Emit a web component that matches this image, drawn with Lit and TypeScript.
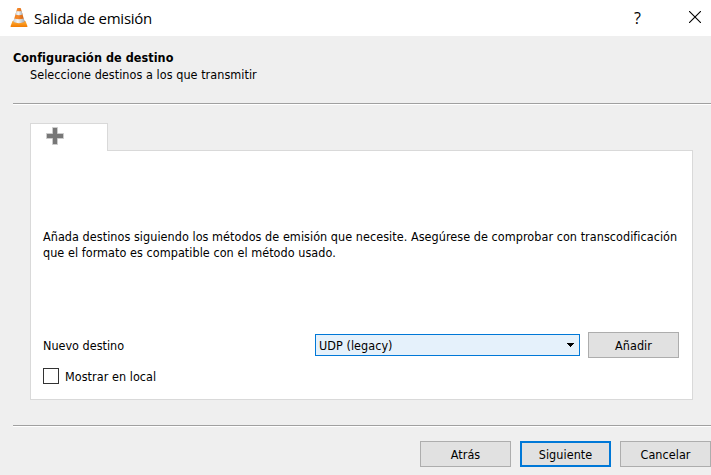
import { LitElement, html, css, svg } from "lit";
import { customElement } from "lit/decorators.js";

const cone = svg`
  <defs>
    <linearGradient id="base" x1="0" y1="0" x2="0" y2="1">
      <stop offset="0" stop-color="#ffb13a"></stop><stop offset="1" stop-color="#f27a00"></stop>
    </linearGradient>
    <linearGradient id="body" x1="0" y1="0" x2="1" y2="0">
      <stop offset="0" stop-color="#ee7a14"></stop><stop offset=".4" stop-color="#f58a2c"></stop><stop offset="1" stop-color="#cf5c0c"></stop>
    </linearGradient>
    <linearGradient id="band" x1="0" y1="0" x2="1" y2="0">
      <stop offset="0" stop-color="#c3cacf"></stop><stop offset=".4" stop-color="#f6f7f8"></stop><stop offset="1" stop-color="#a5adb4"></stop>
    </linearGradient>
  </defs>
  <path d="M2.500 13h13l2 5.300q.1.700-.6.700H1.100q-.7 0-.6-.7z" fill="url(#base)"></path>
  <path d="M7.200 .2Q9-.5 10.800 .2L14.700 14Q9 16.300 3.300 14z" fill="url(#body)"></path>
  <path d="M6.500 2.900Q9 3.700 11.500 2.900L12.600 6.600Q9 7.700 5.400 6.600z" fill="url(#band)"></path>
  <path d="M4.300 10.500Q9 11.900 13.700 10.500L14.700 14Q9 16.300 3.300 14z" fill="url(#band)"></path>`;

@customElement("app-root")
export class AppRoot extends LitElement {
  static styles = css`
    :host {
      display: flex; flex-direction: column; box-sizing: border-box;
      width: 711px; height: 475px; overflow: hidden; background: #efefef; color: #000;
      font: 12.5px/16px "DejaVu Sans Condensed", "DejaVu Sans", sans-serif; letter-spacing: .05px;
    }
    * { box-sizing: border-box; }
    svg { display: block; flex: none; }
    .titlebar { display: flex; align-items: center; height: 36px; flex: none; background: #fff; padding: 0 10px; }
    .title { font: 15px/20px "Open Sans", sans-serif; margin: -1px 0 0 6px; flex: 1; letter-spacing: -.25px; white-space: nowrap; }
    .help { font: 16px/20px "Open Sans", sans-serif; width: 10px; margin: -1px 45px 0 0; }
    .close { margin-top: -2px; }
    .head { height: 67px; flex: none; padding: 14px 13px 0; white-space: nowrap; }
    .heading { font-weight: bold; height: 17px; letter-spacing: .06px; }
    .sub { padding-left: 17px; }
    .rule { height: 2px; flex: none; margin-left: 13px; background: #a0a0a0; border-bottom: 1px solid #fff; }
    .tabs { margin: 18px 18px 0 30px; height: 277px; flex: none; display: flex; flex-direction: column; }
    .tab { width: 78px; height: 28px; flex: none; margin-bottom: -1px; z-index: 1; background: #fff; border: 1px solid #d9d9d9; border-bottom: 0; padding: 3px 0 0 15px; }
    .panel { flex: 1; background: #fff; border: 1px solid #d9d9d9; padding: 78px 13px 0 12px; }
    .info { height: 32px; white-space: nowrap; }
    .row { display: flex; align-items: center; height: 26px; margin-top: 71px; }
    .label { width: 272px; padding-top: 1px; letter-spacing: 0; }
    .combo { display: flex; align-items: center; justify-content: space-between; width: 265px; height: 22px; margin-right: 8px; border: 1px solid #0078d7; background: #e5f1fb; padding: 0 5px 0 3px; }
    .value { padding-top: 1px; }
    .button { width: 91px; height: 26px; flex: none; border: 1px solid #adadad; background: #e1e1e1; display: flex; align-items: center; justify-content: center; padding-top: 1px; }
    .button.primary { border: 2px solid #0078d7; }
    .check { display: flex; align-items: center; gap: 6px; margin-top: 10px; height: 16px; }
    .box { width: 16px; height: 16px; border: 1px solid #333; background: #fff; }
    .check-label { padding-top: 1px; }
    .bottom { margin-top: 25px; }
    .footer { display: flex; justify-content: flex-end; gap: 9px; padding-top: 14px; }
  `;

  render() {
    return html`
      <div class="titlebar">
        <svg width="18" height="20" viewBox="0 0 18 20">${cone}</svg>
        <span class="title">Salida de emisión</span>
        <span class="help">?</span>
        <svg class="close" width="12" height="12" viewBox="0 0 12 12"><path d="M0 0L12 12M12 0L0 12" stroke="#000" stroke-width="1.1"></path></svg>
      </div>
      <div class="head">
        <div class="heading">Configuración de destino</div>
        <div class="sub">Seleccione destinos a los que transmitir</div>
      </div>
      <div class="rule"></div>
      <div class="tabs">
        <div class="tab">
          <svg width="18" height="18" viewBox="0 0 18 18"><path d="M6.500 .5h5v6h6v5h-6v6h-5v-6h-6v-5h6z" fill="#777" stroke="#ccc" stroke-width="1"></path></svg>
        </div>
        <div class="panel">
          <div class="info">
            <div>Añada destinos siguiendo los métodos de emisión que necesite. Asegúrese de comprobar con transcodificación</div>
            <div>que el formato es compatible con el método usado.</div>
          </div>
          <div class="row">
            <span class="label">Nuevo destino</span>
            <div class="combo">
              <span class="value">UDP (legacy)</span>
              <svg width="8" height="4" viewBox="0 0 8 4" shape-rendering="crispEdges"><path d="M0 0h8L4 4z"></path></svg>
            </div>
            <div class="button">Añadir</div>
          </div>
          <div class="check"><span class="box"></span><span class="check-label">Mostrar en local</span></div>
        </div>
      </div>
      <div class="rule bottom"></div>
      <div class="footer">
        <div class="button">Atrás</div>
        <div class="button primary">Siguiente</div>
        <div class="button">Cancelar</div>
      </div>
    `;
  }
}
